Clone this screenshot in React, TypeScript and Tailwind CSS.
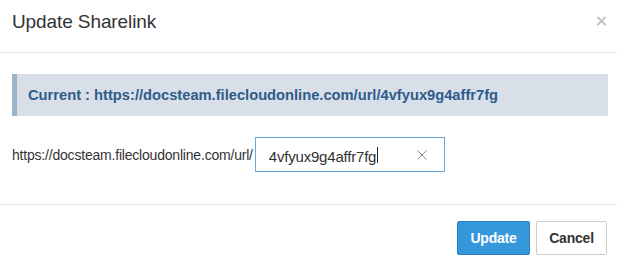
import React from "react";

export default function App() {
  return (
    <div
      className="w-[617px] h-[259px] bg-white flex flex-col overflow-hidden text-[#333]"
      style={{ fontFamily: '"Liberation Sans", Arial, Helvetica, sans-serif' }}
    >
      {/* Header */}
      <div className="h-[53px] shrink-0 border-b border-[#e5e5e5] flex justify-between items-start pl-[12px] pr-[10px]">
        <div className="pt-[11px] text-[19px] leading-[22px] tracking-[-0.1px] text-[#333]">
          Update Sharelink
        </div>
        <button className="mt-[15px] w-[11px] h-[12px] flex items-center justify-center">
          <svg width="11" height="12" viewBox="0 0 11 12">
            <path d="M1.5 2 L9.5 10 M9.5 2 L1.5 10" stroke="#c2c2c2" strokeWidth="2" strokeLinecap="butt" />
          </svg>
        </button>
      </div>

      {/* Body */}
      <div className="h-[152px] shrink-0 border-b border-[#e5e5e5] pt-[21px] pl-[12px] pr-[9px]">
        <div className="h-[42px] bg-[#d8dfe9] border-l-[5px] border-[#9cb3ca] flex items-center pl-[11px]">
          <span className="text-[14.7px] font-bold text-[#2e5c8a] leading-none">
            Current : https://docsteam.filecloudonline.com/url/4vfyux9g4affr7fg
          </span>
        </div>
        <div className="mt-[21px] flex items-center">
          <span className="text-[14px] tracking-[-0.2px] text-[#333] leading-none whitespace-nowrap">
            https://docsteam.filecloudonline.com/url/
          </span>
          <div className="ml-[2px] w-[190px] h-[35px] border border-[#66a9e0] flex items-center pl-[13px] pr-[17px]">
            <div className="flex-1 flex items-center pt-[3px]">
              <span className="text-[15px] tracking-[-0.2px] text-[#333] leading-none">4vfyux9g4affr7fg</span>
              <span className="ml-[1px] w-[1px] h-[16px] bg-[#222] -mt-[2px]" />
            </div>
            <svg width="10" height="10" viewBox="0 0 10 10" className="mt-[1px]">
              <path d="M0.5 0.5 L9.5 9.5 M9.5 0.5 L0.5 9.5" stroke="#8a8a8a" strokeWidth="1" />
            </svg>
          </div>
        </div>
      </div>

      {/* Footer */}
      <div className="flex-1 flex justify-end items-start pt-[16px] pr-[10px] gap-[6px]">
        <button className="w-[73px] h-[34px] rounded-[2px] bg-[#3498db] border border-[#2a80c4] text-white text-[14px] font-bold tracking-[-0.2px] leading-none flex items-center justify-center">
          Update
        </button>
        <button className="w-[71px] h-[34px] rounded-[2px] bg-white border border-[#cccccc] text-[#333] text-[14px] font-bold tracking-[-0.2px] leading-none flex items-center justify-center">
          Cancel
        </button>
      </div>
    </div>
  );
}
